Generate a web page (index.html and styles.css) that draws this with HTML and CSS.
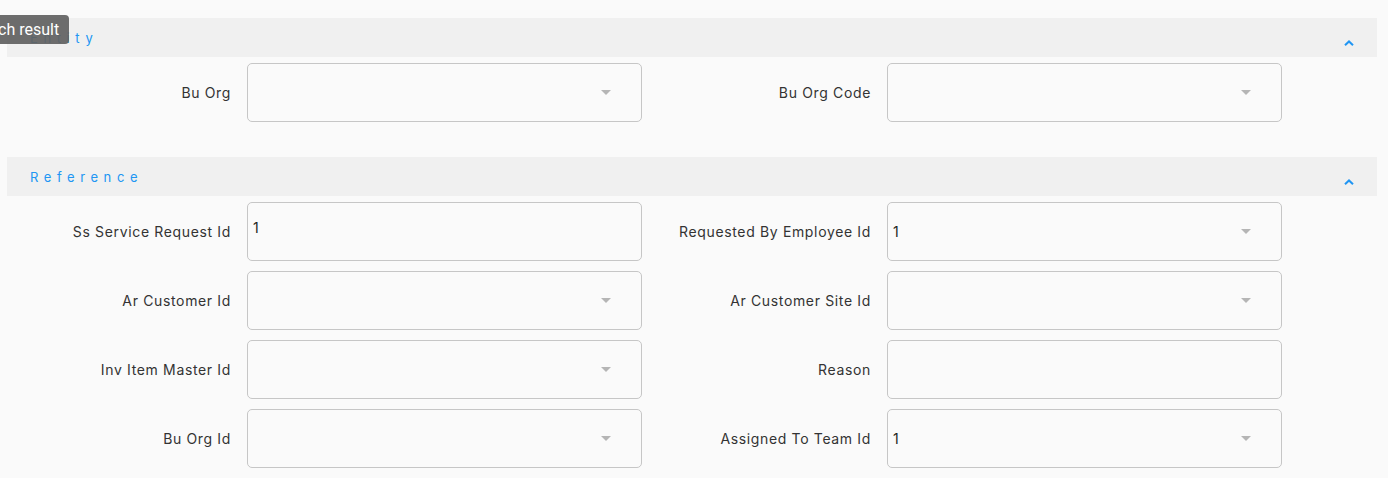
FILE: index.html
```html
<!DOCTYPE html>
<html>
<head>
<meta charset="utf-8">
<link rel="stylesheet" href="styles.css">
</head>
<body>
<div class="page">
  <section class="panel">
    <div class="panel-head">
      <span class="panel-title">Entity</span>
      <svg class="chev" width="10" height="6" viewBox="0 0 10 6"><path d="M1 5.2 L5 1.4 L9 5.2" fill="none" stroke="#2196f3" stroke-width="2"/></svg>
    </div>
    <div class="grid">
      <div class="field"><label class="lbl">Bu Org</label><div class="box select"><span class="val"></span><span class="caret"></span></div></div>
      <div class="field"><label class="lbl">Bu Org Code</label><div class="box select"><span class="val"></span><span class="caret"></span></div></div>
    </div>
  </section>
  <section class="panel second">
    <div class="panel-head">
      <span class="panel-title">Reference</span>
      <svg class="chev" width="10" height="6" viewBox="0 0 10 6"><path d="M1 5.2 L5 1.4 L9 5.2" fill="none" stroke="#2196f3" stroke-width="2"/></svg>
    </div>
    <div class="grid">
      <div class="field"><label class="lbl">Ss Service Request Id</label><div class="box text top"><span class="val">1</span></div></div>
      <div class="field"><label class="lbl">Requested By Employee Id</label><div class="box select"><span class="val">1</span><span class="caret"></span></div></div>
      <div class="field"><label class="lbl">Ar Customer Id</label><div class="box select"><span class="val"></span><span class="caret"></span></div></div>
      <div class="field"><label class="lbl">Ar Customer Site Id</label><div class="box select"><span class="val"></span><span class="caret"></span></div></div>
      <div class="field"><label class="lbl">Inv Item Master Id</label><div class="box select"><span class="val"></span><span class="caret"></span></div></div>
      <div class="field"><label class="lbl">Reason</label><div class="box text"><span class="val"></span></div></div>
      <div class="field"><label class="lbl">Bu Org Id</label><div class="box select"><span class="val"></span><span class="caret"></span></div></div>
      <div class="field"><label class="lbl">Assigned To Team Id</label><div class="box select"><span class="val">1</span><span class="caret"></span></div></div>
    </div>
  </section>
</div>
<div class="tooltip">ch result</div>
</body>
</html>
```
FILE: styles.css
```css
html, body {
  margin: 0;
  padding: 0;
  background: #fafafa;
}
body {
  font-family: Inter, "Liberation Sans", sans-serif;
  color: #333;
  width: 1388px;
  height: 478px;
  overflow: hidden;
  position: relative;
}
.page {
  padding: 18px 11px 0 7px;
}
.panel-head {
  height: 39px;
  background: #f0f0f0;
  display: flex;
  align-items: center;
  justify-content: space-between;
  padding: 0 23px 0 23px;
}
.panel-title {
  color: #2196f3;
  font-size: 13px;
  letter-spacing: 5.6px;
}
.chev {
  margin-top: 10px;
}
.second {
  margin-top: 35px;
}
.grid {
  display: grid;
  grid-template-columns: 640px 640px;
  row-gap: 10px;
  padding-top: 6px;
}
.field {
  display: flex;
  align-items: center;
  gap: 16px;
}
.lbl {
  width: 224px;
  text-align: right;
  font-size: 14px;
  letter-spacing: 0.65px;
  color: #333;
}
.box {
  width: 395px;
  height: 59px;
  box-sizing: border-box;
  border: 1px solid #c6c6c6;
  border-radius: 5px;
  background: #fafafa;
  display: flex;
  align-items: center;
  justify-content: space-between;
  padding: 0 30px 0 5px;
  font-size: 14px;
  color: #222;
}
.box.top {
  align-items: flex-start;
  padding-top: 16px;
}
.caret {
  width: 0;
  height: 0;
  border-left: 5px solid transparent;
  border-right: 5px solid transparent;
  border-top: 5px solid #b5b5b5;
}
.tooltip {
  position: absolute;
  left: -14px;
  top: 15px;
  height: 29px;
  padding: 0 8px 0 12px;
  box-sizing: border-box;
  width: 83px;
  background: rgba(97, 97, 97, 0.92);
  color: #fff;
  border-radius: 4px;
  font-family: Roboto, "Liberation Sans", sans-serif;
  font-size: 16px;
  line-height: 29px;
  white-space: nowrap;
}
```
